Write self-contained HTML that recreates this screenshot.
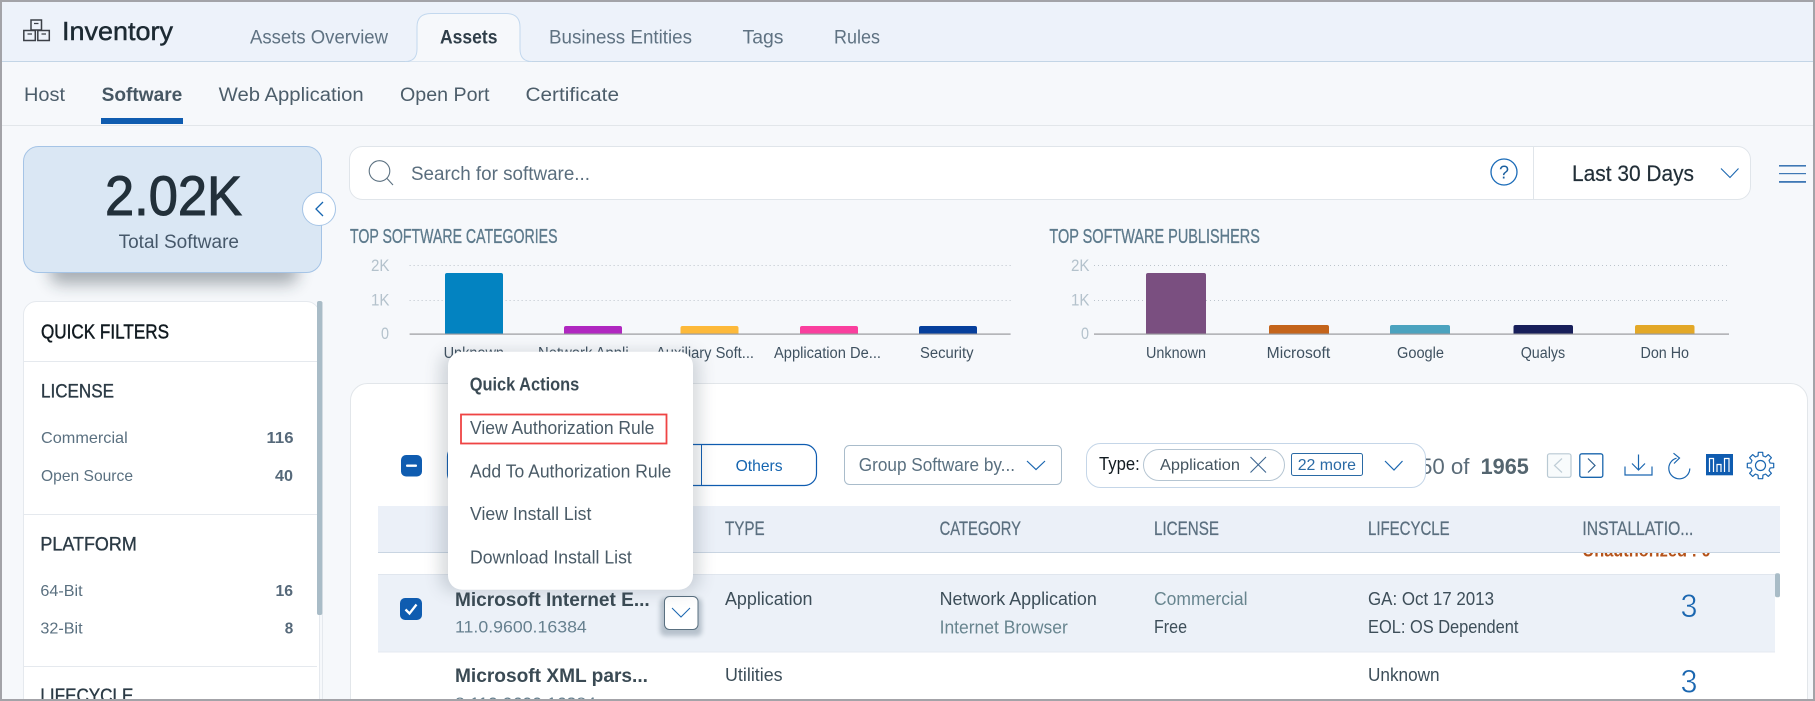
<!DOCTYPE html>
<html lang="en"><head><meta charset="utf-8"><title>Inventory - Software</title>
<style>
html,body{margin:0;padding:0;background:#f6f8fb;width:1815px;height:701px;overflow:hidden}
svg{display:block}
text{font-family:"Liberation Sans",Arial,sans-serif}
.b{font-weight:700}
</style></head><body>
<svg xmlns="http://www.w3.org/2000/svg" width="1815" height="701" viewBox="0 0 1815 701">
<defs>
<filter id="s8" x="-30%" y="-60%" width="160%" height="220%"><feGaussianBlur stdDeviation="8"/></filter>
<filter id="s3" x="-50%" y="-50%" width="200%" height="200%"><feGaussianBlur stdDeviation="2.5"/></filter>
<clipPath id="cut1"><rect x="378" y="553" width="1402" height="30"/></clipPath>
</defs>
<rect width="1815" height="701" fill="#f6f8fb"/>
<!-- header -->
<rect x="0" y="0" width="1815" height="61" fill="#edf2fa"/>
<rect x="0" y="61" width="1815" height="1" fill="#c3d5e6"/>
<path d="M405,61.5 Q417,61.5 417,49 L417,27 Q417,13.5 431,13.5 L506,13.5 Q520,13.5 520,27 L520,49 Q520,61.5 532,61.5 Z" fill="#f6f8fb"/>
<path d="M405,61.5 Q417,61.5 417,49 L417,27 Q417,13.5 431,13.5 L506,13.5 Q520,13.5 520,27 L520,49 Q520,61.5 532,61.5" fill="none" stroke="#c3d8ee" stroke-width="1"/>
<g fill="none" stroke="#3b3f46" stroke-width="1.5">
<rect x="31" y="20" width="10.5" height="10"/><rect x="23.8" y="30.5" width="11.5" height="10"/><rect x="37.8" y="30.5" width="11.5" height="10"/>
<path d="M34,23.5h4.5M27.5,34h4.5M41.5,34h4.5" stroke-width="1.3"/></g>
<text x="62" y="40" font-size="26" fill="#1d2a33" stroke="#1d2a33" stroke-width=".45" textLength="111" lengthAdjust="spacingAndGlyphs">Inventory</text>
<g font-size="19" fill="#5f7282">
<text x="250" y="43.7" textLength="138" lengthAdjust="spacingAndGlyphs">Assets Overview</text>
<text x="549" y="43.7" textLength="143" lengthAdjust="spacingAndGlyphs">Business Entities</text>
<text x="742.5" y="43.7" textLength="41" lengthAdjust="spacingAndGlyphs">Tags</text>
<text x="834" y="43.7" textLength="46" lengthAdjust="spacingAndGlyphs">Rules</text>
</g>
<text x="440" y="43.7" font-size="19" class="b" fill="#2f3e49" textLength="57.5" lengthAdjust="spacingAndGlyphs">Assets</text>
<!-- sub nav -->
<g font-size="19" fill="#4c5d6a">
<text x="24" y="101" textLength="41" lengthAdjust="spacingAndGlyphs">Host</text>
<text x="218.7" y="101" textLength="145" lengthAdjust="spacingAndGlyphs">Web Application</text>
<text x="400" y="101" textLength="89.5" lengthAdjust="spacingAndGlyphs">Open Port</text>
<text x="525.5" y="101" textLength="93.5" lengthAdjust="spacingAndGlyphs">Certificate</text>
</g>
<text x="101.6" y="101" font-size="19" class="b" fill="#465763" textLength="80.7" lengthAdjust="spacingAndGlyphs">Software</text>
<rect x="101" y="118" width="82" height="6" fill="#0f5cb0"/>
<rect x="0" y="125" width="1815" height="1" fill="#e2e6ea"/>
<!-- total card -->
<rect x="50" y="252" width="248" height="32" rx="10" fill="#1c2a36" opacity=".36" filter="url(#s8)"/>
<rect x="23.5" y="146.5" width="298" height="126" rx="15" fill="#dae7f4" stroke="#a5c4e6"/>
<text x="105" y="215" font-size="56" fill="#22303a" stroke="#22303a" stroke-width="1" textLength="137" lengthAdjust="spacingAndGlyphs">2.02K</text>
<text x="118.6" y="248" font-size="19" fill="#46586a" textLength="120.4" lengthAdjust="spacingAndGlyphs">Total Software</text>
<circle cx="319" cy="209" r="16.5" fill="#fff" stroke="#a5c4e6"/>
<path d="M323,202 L316,209 L323,216" fill="none" stroke="#1565b0" stroke-width="1.3"/>
<!-- search -->
<rect x="349.5" y="146.5" width="1401" height="53" rx="13" fill="#fff" stroke="#e0e5ea"/>
<rect x="1533" y="147" width="1" height="52" fill="#e0e5ea"/>
<circle cx="379.5" cy="171" r="10.3" fill="none" stroke="#5d7282" stroke-width="1.1"/>
<path d="M386.8,178.3 L393,185" stroke="#5d7282" stroke-width="1.1" fill="none"/>
<text x="411" y="180" font-size="19" fill="#5a6e7e" textLength="179" lengthAdjust="spacingAndGlyphs">Search for software...</text>
<circle cx="1504" cy="172" r="13" fill="none" stroke="#1a6bb8" stroke-width="1.3"/>
<text x="1499" y="178.5" font-size="18" fill="#1a5f9f" textLength="10" lengthAdjust="spacingAndGlyphs">?</text>
<text x="1572" y="181" font-size="22.5" fill="#222f38" stroke="#222f38" stroke-width=".2" textLength="122" lengthAdjust="spacingAndGlyphs">Last 30 Days</text>
<path d="M1721,168.5 L1730,177.5 L1738.5,168.5" fill="none" stroke="#1a66b0" stroke-width="1.1"/>
<g fill="#3f78b5"><rect x="1779" y="165" width="27" height="1.6"/><rect x="1779" y="173" width="27" height="1.2"/><rect x="1779" y="181" width="27" height="1.8"/></g>
<!-- chart titles -->
<g font-size="20" fill="#5d7a8c" stroke="#5d7a8c" stroke-width=".35">
<text x="350" y="243" textLength="207.5" lengthAdjust="spacingAndGlyphs">TOP SOFTWARE CATEGORIES</text>
<text x="1049.4" y="243" textLength="210.5" lengthAdjust="spacingAndGlyphs">TOP SOFTWARE PUBLISHERS</text>
</g>
<!-- chart 1 -->
<g stroke="#bcc4cc" stroke-dasharray="1 3" stroke-width="1"><path d="M409.6,265.5H1011M409.6,300.5H1011M1094,265.5H1729M1094,300.5H1729"/></g>
<g font-size="16.5" fill="#b4c2cc">
<text x="371" y="271" textLength="18.5" lengthAdjust="spacingAndGlyphs">2K</text>
<text x="371" y="305.5" textLength="18.5" lengthAdjust="spacingAndGlyphs">1K</text>
<text x="381" y="339" textLength="8" lengthAdjust="spacingAndGlyphs">0</text>
<text x="1071" y="271" textLength="18.5" lengthAdjust="spacingAndGlyphs">2K</text>
<text x="1071" y="305.5" textLength="18.5" lengthAdjust="spacingAndGlyphs">1K</text>
<text x="1081" y="339" textLength="8" lengthAdjust="spacingAndGlyphs">0</text>
</g>
<path d="M445,334V275a2,2 0 0 1 2-2H501a2,2 0 0 1 2,2V334Z" fill="#0383c1"/>
<path d="M564,334V328a2,2 0 0 1 2-2H620a2,2 0 0 1 2,2V334Z" fill="#b027c0"/>
<path d="M680.5,334V328a2,2 0 0 1 2-2H736.5a2,2 0 0 1 2,2V334Z" fill="#fdb93a"/>
<path d="M800,334V328a2,2 0 0 1 2-2H856a2,2 0 0 1 2,2V334Z" fill="#fa3f9e"/>
<path d="M919,334V328a2,2 0 0 1 2-2H975a2,2 0 0 1 2,2V334Z" fill="#063f9c"/>
<path d="M1146,334V275a2,2 0 0 1 2-2H1204a2,2 0 0 1 2,2V334Z" fill="#7a4f80"/>
<path d="M1269,334V327a2,2 0 0 1 2-2H1327a2,2 0 0 1 2,2V334Z" fill="#c4641b"/>
<path d="M1390,334V327a2,2 0 0 1 2-2H1448a2,2 0 0 1 2,2V334Z" fill="#4ba3bf"/>
<path d="M1513.5,334V327a2,2 0 0 1 2-2H1571a2,2 0 0 1 2,2V334Z" fill="#181f5a"/>
<path d="M1635,334V327a2,2 0 0 1 2-2H1692.5a2,2 0 0 1 2,2V334Z" fill="#e3a827"/>
<rect x="409.6" y="333.5" width="601" height="1.2" fill="#9a9a9e"/>
<rect x="1094" y="333.5" width="635" height="1.2" fill="#9a9a9e"/>
<g font-size="15.5" fill="#3f5160">
<text x="443.6" y="358" textLength="60.4" lengthAdjust="spacingAndGlyphs">Unknown</text>
<text x="538" y="358" textLength="103" lengthAdjust="spacingAndGlyphs">Network Appli...</text>
<text x="656" y="358" textLength="98" lengthAdjust="spacingAndGlyphs">Auxiliary Soft...</text>
<text x="774" y="358" textLength="107" lengthAdjust="spacingAndGlyphs">Application De...</text>
<text x="920" y="358" textLength="53.5" lengthAdjust="spacingAndGlyphs">Security</text>
<text x="1146" y="358" textLength="60" lengthAdjust="spacingAndGlyphs">Unknown</text>
<text x="1266.7" y="358" textLength="63.5" lengthAdjust="spacingAndGlyphs">Microsoft</text>
<text x="1397" y="358" textLength="47" lengthAdjust="spacingAndGlyphs">Google</text>
<text x="1520.7" y="358" textLength="44.5" lengthAdjust="spacingAndGlyphs">Qualys</text>
<text x="1640.5" y="358" textLength="48.5" lengthAdjust="spacingAndGlyphs">Don Ho</text>
</g>
<!-- quick filters -->
<rect x="23.5" y="301.5" width="296" height="420" rx="13" fill="#fff" stroke="#e5e9ee"/>
<rect x="322" y="302" width="1" height="399" fill="#e5e9ee"/>
<rect x="317" y="301" width="5.3" height="314" rx="2" fill="#a9bcc7"/>
<text x="41" y="338.3" font-size="20" fill="#111a20" stroke="#111a20" stroke-width=".45" textLength="128" lengthAdjust="spacingAndGlyphs">QUICK FILTERS</text>
<rect x="24" y="361" width="293" height="1" fill="#e5e9ee"/>
<text x="41" y="397.7" font-size="19.5" fill="#2b3a45" stroke="#2b3a45" stroke-width=".35" textLength="73" lengthAdjust="spacingAndGlyphs">LICENSE</text>
<g font-size="16" fill="#5a7080">
<text x="41" y="443" textLength="86.7" lengthAdjust="spacingAndGlyphs">Commercial</text>
<text x="41" y="481" textLength="92" lengthAdjust="spacingAndGlyphs">Open Source</text>
<text x="40.4" y="596" textLength="42.2" lengthAdjust="spacingAndGlyphs">64-Bit</text>
<text x="40.4" y="633.3" textLength="42.2" lengthAdjust="spacingAndGlyphs">32-Bit</text>
</g>
<g font-size="16" class="b" fill="#56697a">
<text x="266.5" y="443" textLength="27" lengthAdjust="spacingAndGlyphs">116</text>
<text x="275" y="481" textLength="18" lengthAdjust="spacingAndGlyphs">40</text>
<text x="275.5" y="596" textLength="17.5" lengthAdjust="spacingAndGlyphs">16</text>
<text x="284.7" y="633.3" textLength="8.5" lengthAdjust="spacingAndGlyphs">8</text>
</g>
<rect x="24" y="514" width="293" height="1" fill="#e5e9ee"/>
<text x="40.4" y="550.7" font-size="19.5" fill="#2b3a45" stroke="#2b3a45" stroke-width=".35" textLength="96.4" lengthAdjust="spacingAndGlyphs">PLATFORM</text>
<rect x="24" y="666" width="293" height="1" fill="#e5e9ee"/>
<text x="40.4" y="702" font-size="19.5" fill="#2b3a45" stroke="#2b3a45" stroke-width=".35" textLength="93" lengthAdjust="spacingAndGlyphs">LIFECYCLE</text>
<!-- main card -->
<rect x="350.5" y="383.5" width="1457" height="340" rx="17" fill="#fff" stroke="#e2e6ea"/>
<!-- toolbar -->
<rect x="401" y="455" width="21" height="21.5" rx="5" fill="#0f5cb0"/>
<rect x="406" y="464.5" width="11" height="2.4" rx="1" fill="#fff"/>
<rect x="447.5" y="444.5" width="369" height="41" rx="12" fill="#fff" stroke="#0f5cb0" stroke-width="1.2"/>
<rect x="701" y="445" width="1" height="40" fill="#0f5cb0"/>
<text x="735.6" y="471" font-size="16" fill="#1565b0" textLength="47" lengthAdjust="spacingAndGlyphs">Others</text>
<rect x="844.5" y="445.5" width="217" height="39" rx="5" fill="#fff" stroke="#a9bccb"/>
<text x="858.8" y="471" font-size="18.5" fill="#5a7080" textLength="156.2" lengthAdjust="spacingAndGlyphs">Group Software by...</text>
<path d="M1027,461 L1036,469.5 L1045,461" fill="none" stroke="#1a66b0" stroke-width="1.2"/>
<text x="1420" y="474" font-size="22" fill="#5a6b78" textLength="49.5" lengthAdjust="spacingAndGlyphs">50 of</text>
<rect x="1086.5" y="443.5" width="339" height="44" rx="14" fill="#fff" stroke="#c5d6e8"/>
<text x="1099" y="470" font-size="18.5" fill="#111a20" textLength="40.7" lengthAdjust="spacingAndGlyphs">Type:</text>
<rect x="1143.5" y="449.5" width="141" height="31" rx="15.5" fill="#fff" stroke="#b5c5d2"/>
<text x="1160" y="470" font-size="16" fill="#44545f" textLength="80" lengthAdjust="spacingAndGlyphs">Application</text>
<path d="M1250.5,457 L1266,472.5 M1266,457 L1250.5,472.5" stroke="#3d6690" stroke-width="1.1" fill="none"/>
<rect x="1291.5" y="453.5" width="71" height="22" rx="2" fill="#fff" stroke="#2a6aa5"/>
<text x="1297.7" y="470" font-size="16" fill="#2a6aa5" textLength="58.3" lengthAdjust="spacingAndGlyphs">22 more</text>
<path d="M1385,461 L1394,470 L1402.5,461" fill="none" stroke="#1a66b0" stroke-width="1.2"/>
<text x="1480.6" y="474" font-size="22" class="b" fill="#54656f" textLength="48.2" lengthAdjust="spacingAndGlyphs">1965</text>
<rect x="1547.5" y="453.8" width="23.5" height="23.5" rx="2" fill="#f8fbfc" stroke="#b9c9d3" stroke-width="1.2"/>
<path d="M1562,458.5 L1554.5,465.5 L1562,472.5" fill="none" stroke="#bfcdd6" stroke-width="1.2"/>
<rect x="1579.8" y="453.8" width="23" height="23.5" rx="2" fill="#fff" stroke="#1a66ad" stroke-width="1.3"/>
<path d="M1588,458.5 L1595,465.5 L1588,472.5" fill="none" stroke="#2d5f8f" stroke-width="1.2"/>
<g fill="none" stroke="#1a66b0" stroke-width="1.2">
<path d="M1625,466.5V475H1652V466.5"/><path d="M1638.5,454.5V470M1632,463.5L1638.5,470L1645,463.5"/>
<path d="M1676.5,458.2A10.5,10.5 0 1 0 1689.8,468.5"/><path d="M1673.5,453.2L1679.5,458L1674,463.5"/>
</g>
<rect x="1706" y="454" width="27" height="21.3" fill="#0f5cb0"/>
<g fill="none" stroke="#fff" stroke-width="1.2"><path d="M1709.5,472V458.5H1713.5V472M1717,472V464.5H1721V472M1724.5,472V458.5H1729V472"/></g>
<!-- gear: 8 teeth, centre 1760.5,465.5 -->
<g fill="none" stroke="#1a66b0" stroke-width="1.2" stroke-linejoin="round" transform="translate(1760.5,465.5)">
<g id="gr">
<path d="M-3.75,-9.05L-2.42,-9.7L-2.2,-13.2H2.2L2.42,-9.7L3.75,-9.05"/>
<path transform="rotate(45)" d="M-3.75,-9.05L-2.42,-9.7L-2.2,-13.2H2.2L2.42,-9.7L3.75,-9.05"/>
<path transform="rotate(90)" d="M-3.75,-9.05L-2.42,-9.7L-2.2,-13.2H2.2L2.42,-9.7L3.75,-9.05"/>
<path transform="rotate(135)" d="M-3.75,-9.05L-2.42,-9.7L-2.2,-13.2H2.2L2.42,-9.7L3.75,-9.05"/>
<path transform="rotate(180)" d="M-3.75,-9.05L-2.42,-9.7L-2.2,-13.2H2.2L2.42,-9.7L3.75,-9.05"/>
<path transform="rotate(225)" d="M-3.75,-9.05L-2.42,-9.7L-2.2,-13.2H2.2L2.42,-9.7L3.75,-9.05"/>
<path transform="rotate(270)" d="M-3.75,-9.05L-2.42,-9.7L-2.2,-13.2H2.2L2.42,-9.7L3.75,-9.05"/>
<path transform="rotate(315)" d="M-3.75,-9.05L-2.42,-9.7L-2.2,-13.2H2.2L2.42,-9.7L3.75,-9.05"/>
</g>
<circle cx="0" cy="0" r="5"/>
</g>
<!-- table header -->
<text x="1582.4" y="556.7" font-size="18" class="b" fill="#b5531a" textLength="128.2" lengthAdjust="spacingAndGlyphs" clip-path="url(#cut1)">Unauthorized : 0</text>
<rect x="378" y="506" width="1402" height="46" fill="#ebf0f8"/>
<rect x="378" y="552" width="1402" height="1" fill="#c9d5e2"/>
<g font-size="19.5" fill="#5b6f7f" stroke="#5b6f7f" stroke-width=".25">
<text x="725" y="535" textLength="39.7" lengthAdjust="spacingAndGlyphs">TYPE</text>
<text x="939.6" y="535" textLength="81.4" lengthAdjust="spacingAndGlyphs">CATEGORY</text>
<text x="1154" y="535" textLength="65" lengthAdjust="spacingAndGlyphs">LICENSE</text>
<text x="1368" y="535" textLength="81.6" lengthAdjust="spacingAndGlyphs">LIFECYCLE</text>
<text x="1582.4" y="535" textLength="111" lengthAdjust="spacingAndGlyphs">INSTALLATIO...</text>
</g>
<!-- row 1 -->
<rect x="378" y="574" width="1397" height="78" fill="#ecf1f8"/>
<rect x="378" y="574" width="1397" height="1" fill="#e0e6ee"/>
<rect x="378" y="651.5" width="1397" height="1" fill="#e4e9f0"/>
<rect x="1775" y="573.3" width="5" height="24" rx="2" fill="#a9bcc7"/>
<rect x="400" y="598" width="22" height="22" rx="5" fill="#0f5cb0"/>
<path d="M405.5,609.5 L409.5,613.5 L416.5,604.5" fill="none" stroke="#fff" stroke-width="2.3"/>
<text x="455" y="606" font-size="19" class="b" fill="#3a4a54" textLength="194.7" lengthAdjust="spacingAndGlyphs">Microsoft Internet E...</text>
<text x="455" y="632.7" font-size="17" fill="#66808f" textLength="131.8" lengthAdjust="spacingAndGlyphs">11.0.9600.16384</text>
<rect x="660" y="598" width="42" height="38" rx="5" fill="#3c5568" opacity=".3" filter="url(#s3)"/>
<rect x="664.5" y="596.5" width="33.5" height="33" rx="5" fill="#fff" stroke="#5a7080" stroke-width="1"/>
<path d="M672,608 L681,617 L690,608" fill="none" stroke="#1a66b0" stroke-width="1"/>
<g font-size="18.5" fill="#3d4e59">
<text x="725" y="605" textLength="87.5" lengthAdjust="spacingAndGlyphs">Application</text>
<text x="939.6" y="605" textLength="157.2" lengthAdjust="spacingAndGlyphs">Network Application</text>
<text x="1154" y="633" textLength="33" lengthAdjust="spacingAndGlyphs">Free</text>
<text x="1368" y="605" textLength="126" lengthAdjust="spacingAndGlyphs">GA: Oct 17 2013</text>
<text x="1368" y="633" textLength="150.5" lengthAdjust="spacingAndGlyphs">EOL: OS Dependent</text>
<text x="725" y="681" textLength="57.6" lengthAdjust="spacingAndGlyphs">Utilities</text>
<text x="1368" y="681" textLength="71.6" lengthAdjust="spacingAndGlyphs">Unknown</text>
</g>
<g font-size="18.5" fill="#68858f">
<text x="939.6" y="633.3" textLength="128.2" lengthAdjust="spacingAndGlyphs">Internet Browser</text>
<text x="1154" y="605" textLength="93.5" lengthAdjust="spacingAndGlyphs">Commercial</text>
</g>
<text x="1680.5" y="617" font-size="32" fill="#1a66b0" stroke="#ecf1f8" stroke-width=".6" textLength="17" lengthAdjust="spacingAndGlyphs">3</text>
<text x="1680.5" y="692.7" font-size="32" fill="#1a66b0" stroke="#fff" stroke-width=".6" textLength="17" lengthAdjust="spacingAndGlyphs">3</text>
<text x="455" y="682" font-size="19" class="b" fill="#3a4a54" textLength="193" lengthAdjust="spacingAndGlyphs">Microsoft XML pars...</text>
<text x="455" y="709" font-size="17" fill="#66808f" textLength="141" lengthAdjust="spacingAndGlyphs">8.110.9600.16384</text>
<!-- popup -->
<rect x="440" y="352" width="260" height="240" rx="14" fill="#3c4c58" opacity=".2" filter="url(#s8)"/>
<rect x="448" y="351.7" width="245" height="238" rx="14" fill="#fff"/>
<text x="469.7" y="390.7" font-size="18" class="b" fill="#3a4a54" textLength="109.6" lengthAdjust="spacingAndGlyphs">Quick Actions</text>
<rect x="461" y="414.5" width="205.5" height="29" fill="none" stroke="#ef4444" stroke-width="1.8"/>
<g font-size="18" fill="#4a5b67">
<text x="470" y="434" textLength="184.4" lengthAdjust="spacingAndGlyphs">View Authorization Rule</text>
<text x="470" y="477.7" textLength="201.3" lengthAdjust="spacingAndGlyphs">Add To Authorization Rule</text>
<text x="470" y="520" textLength="121.4" lengthAdjust="spacingAndGlyphs">View Install List</text>
<text x="470" y="563.3" textLength="161.8" lengthAdjust="spacingAndGlyphs">Download Install List</text>
</g>
<!-- outer border -->
<rect x="0" y="0" width="1815" height="2" fill="#a3a3a8"/>
<rect x="0" y="699" width="1815" height="2" fill="#a3a3a8"/>
<rect x="0" y="0" width="2" height="701" fill="#a3a3a8"/>
<rect x="1813" y="0" width="2" height="701" fill="#a3a3a8"/>
</svg>
</body></html>
